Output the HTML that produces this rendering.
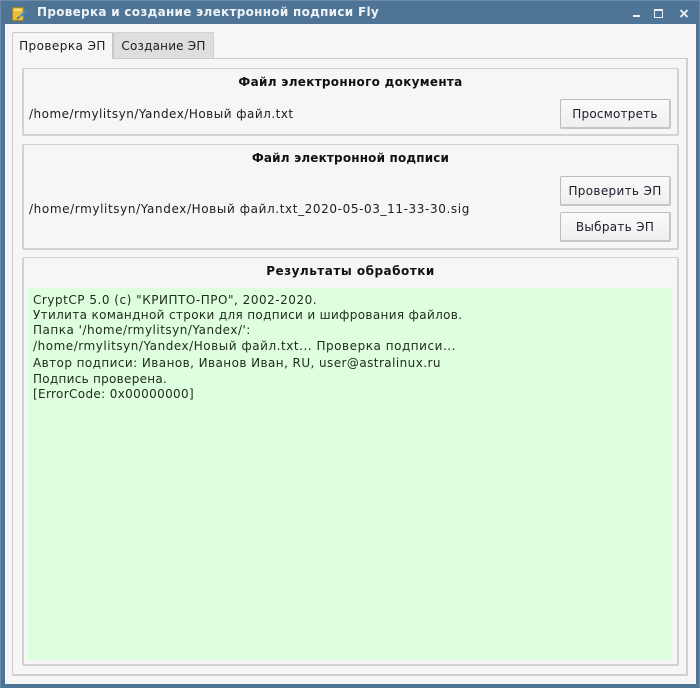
<!DOCTYPE html>
<html lang="ru">
<head>
<meta charset="utf-8">
<style>
html,body{margin:0;padding:0;background:#4f7596;}
body{width:700px;height:688px;position:relative;overflow:hidden;font-family:"DejaVu Sans","Liberation Sans",sans-serif;font-size:12px;color:#1c1c1c;}
div{position:absolute;box-sizing:border-box;}
.t{white-space:nowrap;line-height:15px;}
#win{left:0;top:0;width:700px;height:688px;background:#4f7596;border:1px solid #6b8ba6;border-bottom:1px solid #4f7596;}
#content{left:5px;top:24px;width:691px;height:660px;background:#f6f6f6;}
#title{left:37px;top:5px;font-weight:bold;color:#eef3f7;font-size:12px;letter-spacing:.29px;}
.pane{left:12px;top:58px;width:676px;height:618px;border:1px solid #cbcbcb;border-right:2px solid #d0d0d0;border-bottom:2px solid #d0d0d0;background:#f6f6f6;border-radius:1px;}
.tab{top:32px;height:27px;text-align:center;line-height:27px;}
#tab1{left:12px;width:102px;background:#f6f6f6;border:1px solid #c8c8c8;border-bottom:none;border-right:2px solid #c8c8c8;border-radius:2px 2px 0 0;z-index:2;height:27px;letter-spacing:.45px;}
#tab2{left:114px;width:100px;height:26px;background:#dedede;border-top:1px solid #d2d2d2;border-right:1px solid #d0d0d0;letter-spacing:.2px;}
.grp{left:22px;width:657px;border:1px solid #cdcdcd;border-right:2px solid #d2d2d2;border-bottom:2px solid #d2d2d2;border-left:2px solid #d2d2d2;border-top:1px solid #d2d2d2;border-radius:2px;background:#f6f6f6;}
.h{left:22px;width:657px;text-align:center;font-weight:bold;color:#111;}
.btn{left:560px;width:111px;height:30px;border:1px solid #bcbcbc;border-right:2px solid #c6c6c6;border-bottom:2px solid #c6c6c6;border-radius:2px;background:linear-gradient(#fafafa,#efefef);text-align:center;line-height:29px;white-space:nowrap;color:#1c1c2c;}
#green{left:28px;top:288px;width:644px;height:372px;background:#ddffdd;}
.l{left:33px;line-height:15px;white-space:nowrap;color:#1f2a1f;}
</style>
</head>
<body>
<div id="win"></div>
<svg style="position:absolute;left:11px;top:6px" width="16" height="16" viewBox="0 0 16 16">
<rect x="1.5" y="1.5" width="11" height="13" rx="1.5" fill="#e8bc3c" stroke="#a5831f" stroke-width="1"/>
<rect x="3" y="3" width="8" height="2" fill="#f5dc8a"/>
<path d="M8 11l3-4 3-2 1 1.5-3 3.5z" fill="#3d8fc8"/>
<path d="M6 13l2.5-2.5" stroke="#2c6c9e" stroke-width="1.4"/>
</svg>
<div id="title" class="t">Проверка и создание электронной подписи Fly</div>
<svg style="position:absolute;left:630px;top:4px" width="66" height="18" viewBox="0 0 66 18">
<rect x="3" y="11" width="7" height="2" fill="#e8eef3"/>
<rect x="24.5" y="5.5" width="8" height="8" fill="none" stroke="#e8eef3" stroke-width="1"/>
<rect x="24" y="5" width="9" height="2" fill="#e8eef3"/>
<path d="M50.5 6l7 7M57.5 6l-7 7" stroke="#eef3f7" stroke-width="1.8"/>
</svg>
<div id="content"></div>
<div class="pane"></div>
<div id="tab2" class="tab t">Создание ЭП</div>
<div id="tab1" class="tab t">Проверка ЭП</div>

<div class="grp" style="top:68px;height:68px;"></div>
<div class="h t" style="top:75px;letter-spacing:.3px;">Файл электронного документа</div>
<div class="t" style="left:29px;top:107px;letter-spacing:.49px;">/home/rmylitsyn/Yandex/Новый файл.txt</div>
<div class="btn" style="top:99px;letter-spacing:.22px;">Просмотреть</div>

<div class="grp" style="top:144px;height:106px;"></div>
<div class="h t" style="top:151px;letter-spacing:.17px;">Файл электронной подписи</div>
<div class="t" style="left:29px;top:202px;letter-spacing:.61px;">/home/rmylitsyn/Yandex/Новый файл.txt_2020-05-03_11-33-30.sig</div>
<div class="btn" style="top:176px;letter-spacing:.33px;">Проверить ЭП</div>
<div class="btn" style="top:212px;letter-spacing:.3px;">Выбрать ЭП</div>

<div class="grp" style="top:257px;height:409px;"></div>
<div class="h t" style="top:264px;letter-spacing:.5px;">Результаты обработки</div>
<div id="green"></div>
<div class="l" style="top:293px;letter-spacing:.52px;">CryptCP 5.0 (c) "КРИПТО-ПРО", 2002-2020.</div>
<div class="l" style="top:308px;letter-spacing:.35px;">Утилита командной строки для подписи и шифрования файлов.</div>
<div class="l" style="top:323px;letter-spacing:.5px;">Папка '/home/rmylitsyn/Yandex/':</div>
<div class="l" style="top:339px;letter-spacing:.53px;">/home/rmylitsyn/Yandex/Новый файл.txt... Проверка подписи...</div>
<div class="l" style="top:356px;letter-spacing:.43px;">Автор подписи: Иванов, Иванов Иван, RU, user@astralinux.ru</div>
<div class="l" style="top:372px;letter-spacing:.28px;">Подпись проверена.</div>
<div class="l" style="top:387px;letter-spacing:.35px;">[ErrorCode: 0x00000000]</div>
</body>
</html>
